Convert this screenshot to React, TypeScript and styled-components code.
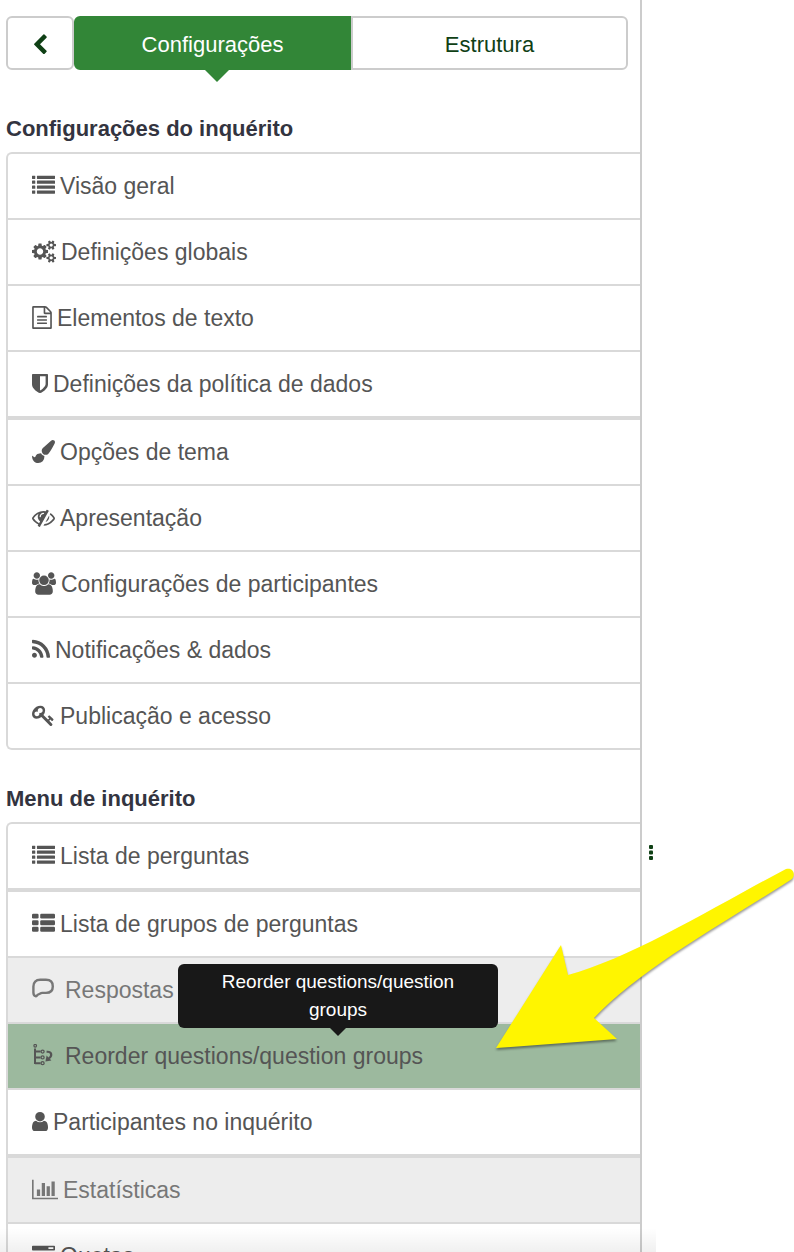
import React from "react";
import styled, { createGlobalStyle, css } from "styled-components";

const GlobalStyle = createGlobalStyle`
  *, *::before, *::after { box-sizing: border-box; }
  body {
    margin: 0;
    background: #fff;
    color: #555;
    font-family: "Liberation Sans", Arial, sans-serif;
  }
`;

const Page = styled.div`
  position: relative;
  display: flex;
  height: 100vh;
  overflow: hidden;
`;

const Sidebar = styled.aside`
  width: calc(100% - 152px);
  padding: 16px 0 0 6px;
  border-right: 2px solid #ccc;
`;

const Tabs = styled.div`
  display: grid;
  grid-template-columns: 68px 1fr 1fr;
  height: 54px;
  margin-right: 12px;
`;

const TabButton = styled.button<{ $active?: boolean; $side: "both" | "left" | "right" }>`
  position: relative;
  display: flex;
  align-items: center;
  justify-content: center;
  padding: 3px 0 0;
  border: 2px solid ${(p) => (p.$active ? "#328637" : "#ccc")};
  border-radius: ${(p) => ({ both: "6px", left: "6px 0 0 6px", right: "0 6px 6px 0" })[p.$side]};
  background: ${(p) => (p.$active ? "#328637" : "#fff")};
  color: ${(p) => (p.$active ? "#fff" : "#0f4015")};
  font: 22px/32px "Liberation Sans", Arial, sans-serif;
  cursor: pointer;
  ${(p) =>
    p.$active &&
    css`
      &::after {
        content: "";
        position: absolute;
        top: 100%;
        left: 50%;
        border: 14px solid transparent;
        border-top-color: #328637;
        border-bottom: 0;
        margin-left: -10px;
      }
    `}
`;

const Section = styled.section`
  padding-top: 40px;
  & + & { padding-top: 30px; }
`;

const Heading = styled.h2`
  margin: 0;
  padding: 4px 0 8px;
  color: #333440;
  font-size: 22px;
  line-height: 30px;
`;

const Menu = styled.ul`
  margin: 0;
  padding: 0;
  list-style: none;
  border: 2px solid #d9d9d9;
  border-right: 0;
  border-radius: 6px 0 0 6px;
`;

const MenuItem = styled.li<{ $groupEnd?: boolean }>`
  position: relative;
  border-bottom: ${(p) => (p.$groupEnd ? 4 : 2)}px solid #d9d9d9;
  &:last-child { border-bottom: 0; }
`;

const MenuLink = styled.a<{ $tone?: "disabled" | "active"; $wide?: boolean }>`
  display: flex;
  align-items: center;
  gap: ${(p) => (p.$wide ? 10 : 5)}px;
  height: 64px;
  padding: 0 24px;
  background: ${(p) => (p.$tone === "disabled" ? "#ededed" : p.$tone === "active" ? "#9cb99e" : "transparent")};
  color: ${(p) => (p.$tone === "disabled" ? "#777" : "#555")};
  font-size: 23px;
  line-height: 32px;
  text-decoration: none;
  white-space: nowrap;
`;

const Glyph = styled.svg`
  flex: none;
  height: 23px;
  margin-bottom: 1px;
  fill: currentColor;
`;

const Tooltip = styled.div`
  position: absolute;
  z-index: 2;
  bottom: calc(100% - 4px);
  left: 170px;
  width: 320px;
  padding: 4px 16px;
  border-radius: 6px;
  background: #181818;
  color: #fff;
  font-size: 19px;
  line-height: 28px;
  text-align: center;
  &::after {
    content: "";
    position: absolute;
    top: 100%;
    left: 50%;
    margin-left: -8px;
    border: 8px solid transparent;
    border-top-color: #181818;
    border-bottom: 0;
  }
`;

const Pointer = styled.svg`
  position: absolute;
  z-index: 3;
  top: -164px;
  left: 482px;
  width: 304px;
  height: 196px;
  filter: drop-shadow(0 2px 1px rgba(0, 0, 0, 0.4));
  pointer-events: none;
`;

const Content = styled.main`
  display: flex;
  flex: 1;
  align-items: flex-start;
  padding: 845px 0 0 6px;
`;

const Handle = styled.button`
  display: flex;
  padding: 0;
  border: 0;
  background: none;
  color: #0f4015;
  cursor: col-resize;
`;

const BottomFade = styled.div`
  position: absolute;
  bottom: 0;
  left: 0;
  width: calc(100% - 138px);
  height: 24px;
  background: linear-gradient(rgba(0, 0, 0, 0), rgba(0, 0, 0, 0.06));
  pointer-events: none;
`;

type Drawing = { box: string; width: number; body: React.ReactNode };

const listRow = (y: number) => (
  <React.Fragment key={y}>
    <rect x="0" y={y} width="256" height="256" rx="32" />
    <rect x="384" y={y} width="1408" height="256" rx="32" />
  </React.Fragment>
);

const thRow = (y: number) => (
  <React.Fragment key={y}>
    <rect x="0" y={y} width="512" height="384" rx="96" />
    <rect x="640" y={y} width="1152" height="384" rx="96" />
  </React.Fragment>
);

const icons: Record<string, Drawing> = {
  list: { box: "0 0 1792 1792", width: 23, body: [128, 512, 896, 1280].map(listRow) },
  thList: { box: "0 0 1792 1792", width: 23, body: [128, 640, 1152].map(thRow) },
  cogs: {
    box: "128 0 1920 1792",
    width: 24,
    body: (
      <path d="M1024 896q0-106-75-181t-181-75-181 75-75 181 75 181 181 75 181-75 75-181zm768 512q0-52-38-90t-90-38-90 38-38 90q0 53 37.5 90.5t90.5 37.5 90.5-37.5 37.5-90.5zm0-1024q0-52-38-90t-90-38-90 38-38 90q0 53 37.5 90.5t90.5 37.5 90.5-37.5 37.5-90.5zm-384 421v185q0 10-7 19.5t-16 10.5l-155 24q-11 35-32 76 34 48 90 115 7 11 7 20 0 12-7 19-23 30-82.5 89.5t-78.5 59.5q-11 0-21-7l-115-90q-37 19-77 31-11 108-23 155-7 24-30 24h-186q-11 0-20-7.5t-10-17.5l-23-153q-34-10-75-31l-118 89q-7 7-20 7-11 0-21-8-144-133-144-160 0-9 7-19 10-14 41-53t47-61q-23-44-35-82l-152-24q-10-1-17-9.5t-7-19.5v-185q0-10 7-19.5t16-10.5l155-24q11-35 32-76-34-48-90-115-7-11-7-20 0-12 7-20 22-30 82-89t79-59q11 0 21 7l115 90q34-18 77-32 11-108 23-154 7-24 30-24h186q11 0 20 7.5t10 17.5l23 153q34 10 75 31l118-89q8-7 20-7 11 0 21 8 144 133 144 160 0 8-7 19-12 16-42 54t-45 60q23 48 34 82l152 23q10 2 17 10.5t7 19.5zm640 533v140q0 16-149 31-12 27-30 52 51 113 51 138 0 4-4 7-122 71-124 71-8 0-46-47t-52-68q-20 2-30 2t-30-2q-14 21-52 68t-46 47q-2 0-124-71-4-3-4-7 0-25 51-138-18-25-30-52-149-15-149-31v-140q0-16 149-31 13-29 30-52-51-113-51-138 0-4 4-7 4-2 35-20t59-34 30-16q8 0 46 46.5t52 67.5q20-2 30-2t30 2q51-71 92-112l6-2q4 0 124 70 4 3 4 7 0 25-51 138 17 23 30 52 149 15 149 31zm0-1024v140q0 16-149 31-12 27-30 52 51 113 51 138 0 4-4 7-122 71-124 71-8 0-46-47t-52-68q-20 2-30 2t-30-2q-14 21-52 68t-46 47q-2 0-124-71-4-3-4-7 0-25 51-138-18-25-30-52-149-15-149-31v-140q0-16 149-31 13-29 30-52-51-113-51-138 0-4 4-7 4-2 35-20t59-34 30-16q8 0 46 46.5t52 67.5q20-2 30-2t30 2q51-71 92-112l6-2q4 0 124 70 4 3 4 7 0 25-51 138 17 23 30 52 149 15 149 31z" />
    ),
  },
  file: {
    box: "128 0 1536 1792",
    width: 20,
    body: (
      <path d="M1596 380q28 28 48 76t20 88v1152q0 40-28 68t-68 28h-1344q-40 0-68-28t-28-68v-1600q0-40 28-68t68-28h896q40 0 88 20t76 48zm-444-244v376h376q-10-29-22-41l-313-313q-12-12-41-22zm384 1528v-1024h-416q-40 0-68-28t-28-68v-416h-768v1536h1280zm-1024-864q0-14 9-23t23-9h704q14 0 23 9t9 23v64q0 14-9 23t-23 9h-704q-14 0-23-9t-9-23v-64zm736 224q14 0 23 9t9 23v64q0 14-9 23t-23 9h-704q-14 0-23-9t-9-23v-64q0-14 9-23t23-9h704zm0 256q14 0 23 9t9 23v64q0 14-9 23t-23 9h-704q-14 0-23-9t-9-23v-64q0-14 9-23t23-9h704z" />
    ),
  },
  shield: {
    box: "256 0 1280 1792",
    width: 16,
    body: (
      <path d="M1344 960v-640h-448v1137q119-63 213-137 235-184 235-360zm192-768v768q0 86-33.5 170.5t-83 150-118 127.5-126.5 103-121 77.5-89.5 49.5-42.5 20q-12 6-26 6t-26-6q-16-7-42.5-20t-89.5-49.5-121-77.5-126.5-103-118-127.5-83-150-33.5-170.5v-768q0-26 19-45t45-19h1152q26 0 45 19t19 45z" />
    ),
  },
  brush: {
    box: "0 0 1792 1792",
    width: 23,
    body: (
      <path d="M1615 0q70 0 122.5 46.5t52.5 116.5q0 63-45 151-332 629-465 752-97 91-218 91-126 0-216.5-92.5t-90.5-219.5q0-128 92-212l638-579q59-54 130-54zm-909 1034q39 76 106.5 130t150.5 76l1 71q4 213-129.5 347t-348.5 134q-123 0-218-46.5t-152.5-127.5-86.5-183-29-220q7 5 41 30t62 44.5 59 36.5 46 17q41 0 55-37 25-66 57.5-112.5t69.5-76 88-47.5 103-25.5 125-10.5z" />
    ),
  },
  eyeSlash: {
    box: "0 0 1792 1792",
    width: 23,
    body: (
      <path d="M555 1335l78-141q-87-63-136-159t-49-203q0-121 61-225-229 117-381 353 167 258 427 375zm389-759q0-20-14-34t-34-14q-125 0-214.5 89.5t-89.5 214.5q0 20 14 34t34 14 34-14 14-34q0-86 61-147t147-61q20 0 34-14t14-34zm363-191q0 7-1 9-106 189-316 567t-315 566l-49 89q-10 16-28 16-12 0-134-70-16-10-16-28 0-12 44-87-143-65-263.5-173t-208.5-245q-20-31-20-69t20-69q153-235 380-371t496-136q89 0 180 17l54-97q10-16 28-16 5 0 18 6t31 15.5 33 18.5 31.5 18.5 19.5 11.5q16 10 16 27zm37 447q0 139-79 253.5t-209 164.5l280-502q8 45 8 84zm448 128q0 35-20 69-39 64-109 145-150 172-347.5 267t-419.5 95l74-132q212-18 392.5-137t301.5-307q-115-179-282-294l63-112q95 64 182.5 153t144.5 184q20 34 20 69z" />
    ),
  },
  users: {
    box: "0 0 1920 1792",
    width: 24,
    body: (
      <path d="M593 896q-162 5-265 128h-134q-82 0-138-40.5t-56-118.5q0-353 124-353 6 0 43.5 21t97.5 42.5 119 21.5q67 0 133-23-5 37-5 66 0 139 81 256zm1071 637q0 120-73 189.5t-194 69.5h-874q-121 0-194-69.5t-73-189.5q0-53 3.5-103.5t14-109 26.5-108.5 43-97.5 62-81 85.5-53.5 111.5-20q10 0 43 21.5t73 48 107 48 135 21.5 135-21.5 107-48 73-48 43-21.5q61 0 111.5 20t85.5 53.5 62 81 43 97.5 26.5 108.5 14 109 3.5 103.5zm-1024-1277q0 106-75 181t-181 75-181-75-75-181 75-181 181-75 181 75 75 181zm704 384q0 159-112.5 271.5t-271.5 112.5-271.5-112.5-112.5-271.5 112.5-271.5 271.5-112.5 271.5 112.5 112.5 271.5zm576 225q0 78-56 118.5t-138 40.5h-134q-103-123-265-128 81-117 81-256 0-29-5-66 66 23 133 23 59 0 119-21.5t97.5-42.5 43.5-21q124 0 124 353zm-128-609q0 106-75 181t-181 75-181-75-75-181 75-181 181-75 181 75 75 181z" />
    ),
  },
  rss: {
    box: "192 0 1408 1792",
    width: 18,
    body: (
      <path d="M576 1344q0 80-56 136t-136 56-136-56-56-136 56-136 136-56 136 56 56 136zm512 123q2 28-17 48-18 21-47 21h-135q-25 0-43-16.5t-20-41.5q-22-229-184.5-391.5t-391.5-184.5q-25-2-41.5-20t-16.5-43v-135q0-29 21-47 17-17 43-17h5q160 13 306 80.5t259 181.5q114 113 181.5 259t80.5 306zm512 2q2 27-18 47-18 20-46 20h-143q-26 0-44.5-17.5t-19.5-42.5q-12-215-101-408.5t-231.5-336-336-231.5-408.5-102q-25-1-42.5-19.5t-17.5-43.5v-143q0-28 20-46 18-18 44-18h3q262 13 501.5 120t425.5 294q187 186 294 425.5t120 501.5z" />
    ),
  },
  key: {
    box: "0 0 1792 1792",
    width: 23,
    body: (
      <path d="M832 512q0-80-56-136t-136-56-136 56-56 136q0 42 19 83-41-19-83-19-80 0-136 56t-56 136 56 136 136 56 136-56 56-136q0-42-19-83 41 19 83 19 80 0 136-56t56-136zm851 704q0 17-49 66t-66 49q-9 0-28.5-16t-36.5-33-38.5-40-24.5-26l-96 96 220 220q28 28 28 68 0 42-39 81t-81 39q-40 0-68-28l-671-671q-176 131-365 131-163 0-265.5-102.5t-102.5-265.5q0-160 95-313t248-248 313-95q163 0 265.5 102.5t102.5 265.5q0 189-131 365l355 355 96-96q-3-3-26-24.5t-40-38.5-33-36.5-16-28.5q0-17 49-66t66-49q13 0 23 10 6 6 46 44.5t82 79.5 86.5 86 73 78 28.5 41z" />
    ),
  },
  user: {
    box: "256 0 1280 1792",
    width: 16,
    body: (
      <path d="M1536 1399q0 109-62.5 187t-150.5 78h-854q-88 0-150.5-78t-62.5-187q0-85 8.5-160.5t31.5-152 58.5-131 94-89 134.5-34.5q131 128 313 128t313-128q76 0 134.5 34.5t94 89 58.5 131 31.5 152 8.5 160.5zm-256-887q0 159-112.5 271.5t-271.5 112.5-271.5-112.5-112.5-271.5 112.5-271.5 271.5-112.5 271.5 112.5 112.5 271.5z" />
    ),
  },
  chart: {
    box: "0 0 2048 1792",
    width: 26,
    body: (
      <path d="M640 896v512h-256v-512h256zm384-512v1024h-256v-1024h256zm1024 1152v128h-2048v-1536h128v1408h1920zm-640-896v768h-256v-768h256zm384-384v1152h-256v-1152h256z" />
    ),
  },
  tasks: {
    box: "0 0 1792 1792",
    width: 23,
    body: (
      <path
        fillRule="evenodd"
        d="M1024 1408h640v-128h-640zM640 896h1024v-128h-1024zM1280 384h384v-128h-384zM64 1152h1664q64 0 64 64v256q0 64-64 64h-1664q-64 0-64-64v-256q0-64 64-64zM64 640h1664q64 0 64 64v256q0 64-64 64h-1664q-64 0-64-64v-256q0-64 64-64zM64 128h1664q64 0 64 64v256q0 64-64 64h-1664q-64 0-64-64v-256q0-64 64-64z"
      />
    ),
  },
  comment: {
    box: "0 0 23 23",
    width: 23,
    body: (
      <path
        d="M8.2 1.8H14C18.4 1.8 20.8 4.4 20.8 8.4C20.8 12.6 18.2 14.9 14 14.9H10.2C8.6 14.9 7.6 16.2 6 16.6C5 16.9 4.8 18.4 3.6 18.2C1.8 17.8 1.4 16.4 1.4 14.6V8.4C1.4 4.4 3.8 1.8 8.2 1.8Z"
        fill="none"
        stroke="currentColor"
        strokeWidth="2.4"
        strokeLinejoin="round"
      />
    ),
  },
  reorder: {
    box: "0 0 23 23",
    width: 23,
    body: (
      <g fill="none" stroke="currentColor" strokeWidth="2">
        <circle cx="3.2" cy="1.8" r="1.3" strokeWidth="1.2" />
        <path d="M3 4.4V20M3 7.6H8.6M3 13.4H8.6M3 19.2H8.6" />
        <circle cx="10.6" cy="7.6" r="1.5" strokeWidth="1.3" />
        <circle cx="10.6" cy="13.4" r="1.5" strokeWidth="1.3" />
        <circle cx="10.6" cy="19.2" r="1.5" strokeWidth="1.3" />
        <path d="M14.6 7.8C19.8 7.4 20.6 11.4 17 14.4" strokeWidth="2.2" />
        <path d="M14.6 11.6L19.4 16.6L13.4 17.4Z" fill="currentColor" stroke="none" />
      </g>
    ),
  },
};

const Icon = ({ name }: { name: string }) => {
  const { box, width, body } = icons[name];
  return (
    <Glyph viewBox={box} width={width} aria-hidden="true">
      {body}
    </Glyph>
  );
};

type Entry = {
  icon: string;
  label: string;
  tone?: "disabled" | "active";
  wide?: boolean;
  groupEnd?: boolean;
  tip?: string;
};

const surveySettings: Entry[] = [
  { icon: "list", label: "Visão geral" },
  { icon: "cogs", label: "Definições globais" },
  { icon: "file", label: "Elementos de texto" },
  { icon: "shield", label: "Definições da política de dados", groupEnd: true },
  { icon: "brush", label: "Opções de tema" },
  { icon: "eyeSlash", label: "Apresentação" },
  { icon: "users", label: "Configurações de participantes" },
  { icon: "rss", label: "Notificações & dados" },
  { icon: "key", label: "Publicação e acesso" },
];

const surveyMenu: Entry[] = [
  { icon: "list", label: "Lista de perguntas", groupEnd: true },
  { icon: "thList", label: "Lista de grupos de perguntas" },
  { icon: "comment", label: "Respostas", tone: "disabled", wide: true },
  {
    icon: "reorder",
    label: "Reorder questions/question groups",
    tone: "active",
    wide: true,
    tip: "Reorder questions/question groups",
  },
  { icon: "user", label: "Participantes no inquérito", groupEnd: true },
  { icon: "chart", label: "Estatísticas", tone: "disabled" },
  { icon: "tasks", label: "Quotas" },
];

const MenuSection = ({ title, entries }: { title: string; entries: Entry[] }) => (
  <Section>
    <Heading>{title}</Heading>
    <Menu>
      {entries.map((e) => (
        <MenuItem key={e.label} $groupEnd={e.groupEnd}>
          <MenuLink href="#" $tone={e.tone} $wide={e.wide} aria-disabled={e.tone === "disabled"}>
            <Icon name={e.icon} />
            <span>{e.label}</span>
          </MenuLink>
          {e.tip && (
            <>
              <Tooltip role="tooltip">{e.tip}</Tooltip>
              <Pointer viewBox="490 860 304 196" aria-hidden="true">
                <path
                  fill="#fff500"
                  d="M496 1048L561 945L568 975C632 958 712 908 786 869C793 867 796 874 792 879C730 919 638 970 594 1018L617 1039Z"
                />
              </Pointer>
            </>
          )}
        </MenuItem>
      ))}
    </Menu>
  </Section>
);

export default function App() {
  return (
    <>
      <GlobalStyle />
      <Page>
        <Sidebar>
          <Tabs>
            <TabButton $side="both" aria-label="Voltar">
              <svg width="22" height="22" viewBox="0 0 1792 1792" fill="currentColor" aria-hidden="true">
                <path d="M1427 301l-531 531 531 531q19 19 19 45t-19 45l-166 166q-19 19-45 19t-45-19l-742-742q-19-19-19-45t19-45l742-742q19-19 45-19t45 19l166 166q19 19 19 45t-19 45z" />
              </svg>
            </TabButton>
            <TabButton $side="left" $active>
              Configurações
            </TabButton>
            <TabButton $side="right">Estrutura</TabButton>
          </Tabs>
          <MenuSection title="Configurações do inquérito" entries={surveySettings} />
          <MenuSection title="Menu de inquérito" entries={surveyMenu} />
        </Sidebar>
        <Content>
          <Handle aria-label="Redimensionar">
            <svg width="6" height="16" viewBox="0 0 6 16" fill="currentColor" aria-hidden="true">
              <rect x="1" y="0" width="4" height="4" rx="1" />
              <rect x="1" y="5.5" width="4" height="4" rx="1" />
              <rect x="1" y="11" width="4" height="4" rx="1" />
            </svg>
          </Handle>
        </Content>
        <BottomFade />
      </Page>
    </>
  );
}
